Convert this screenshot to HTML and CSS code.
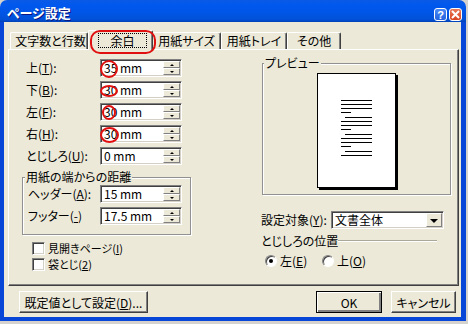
FILE: index.html
```html
<!DOCTYPE html>
<html>
<head>
  <meta charset="UTF-8">
  <link rel="stylesheet" href="styles.css">
</head>
<body>
  <!-- ダイアログ本体 -->
  <div class="window">
    <div class="titlebar">
      <span class="title">ページ設定</span>
      <span class="cap-btn help">?</span>
      <span class="cap-btn close">
        <svg width="9" height="9" viewBox="0 0 9 9"><path d="M1 1L8 8M8 1L1 8" stroke="#fff" stroke-width="2"/></svg>
      </span>
    </div>

    <div class="client">
      <!-- タブ -->
      <div class="tabs">
        <div class="tab t-chars">文字数と行数</div>
        <div class="tab t-margin active"><span class="focus">余白</span></div>
        <div class="tab t-size">用紙サイズ</div>
        <div class="tab t-tray">用紙トレイ</div>
        <div class="tab t-other">その他</div>
      </div>

      <!-- タブページ -->
      <div class="panel">
        <div class="col-left">
          <div class="field">
            <label>上(<u>T</u>):</label>
            <div class="spin mark m-top"><span class="val">35 mm</span><span class="arrows"><span class="up"></span><span class="down"></span></span></div>
          </div>
          <div class="field">
            <label>下(<u>B</u>):</label>
            <div class="spin mark m-bottom"><span class="val">30 mm</span><span class="arrows"><span class="up"></span><span class="down"></span></span></div>
          </div>
          <div class="field">
            <label>左(<u>F</u>):</label>
            <div class="spin mark m-left"><span class="val">30 mm</span><span class="arrows"><span class="up"></span><span class="down"></span></span></div>
          </div>
          <div class="field">
            <label>右(<u>H</u>):</label>
            <div class="spin mark m-right"><span class="val">30 mm</span><span class="arrows"><span class="up"></span><span class="down"></span></span></div>
          </div>
          <div class="field">
            <label>とじしろ(<u>U</u>):</label>
            <div class="spin"><span class="val">0 mm</span><span class="arrows"><span class="up"></span><span class="down"></span></span></div>
          </div>

          <fieldset class="group">
            <legend>用紙の端からの距離</legend>
            <div class="field">
              <label>ヘッダー(<u>A</u>):</label>
              <div class="spin"><span class="val">15 mm</span><span class="arrows"><span class="up"></span><span class="down"></span></span></div>
            </div>
            <div class="field">
              <label>フッター(<u>-</u>)</label>
              <div class="spin"><span class="val">17.5 mm</span><span class="arrows"><span class="up"></span><span class="down"></span></span></div>
            </div>
          </fieldset>

          <div class="checks">
            <div class="check"><span class="cb"></span>見開きページ(<u>I</u>)</div>
            <div class="check"><span class="cb"></span>袋とじ(<u>2</u>)</div>
          </div>
        </div>

        <div class="col-right">
          <fieldset class="preview">
            <legend>プレビュー</legend>
            <div class="page">
              <div class="para"><i class="ln"></i><i class="ln"></i><i class="ln"></i><i class="ln short"></i></div>
              <div class="para"><i class="ln indent"></i><i class="ln"></i><i class="ln"></i><i class="ln short"></i></div>
              <div class="para"><i class="ln indent"></i><i class="ln"></i><i class="ln"></i><i class="ln short"></i></div>
              <div class="para"><i class="ln indent"></i><i class="ln"></i></div>
            </div>
          </fieldset>

          <div class="select-row">
            <label>設定対象(<u>Y</u>):</label>
            <div class="select"><span class="val">文書全体</span><span class="drop"><span class="tri"></span></span></div>
          </div>

          <div class="sep-row">
            <span class="sep-label">とじしろの位置</span>
            <span class="sep-line"></span>
          </div>

          <div class="radios">
            <div class="radio r-left"><span class="rb on"></span>左(<u>E</u>)</div>
            <div class="radio"><span class="rb"></span>上(<u>O</u>)</div>
          </div>
        </div>
      </div>

      <!-- ボタン -->
      <div class="footer">
        <button class="btn btn-default">既定値として設定(<u>D</u>)...</button>
        <button class="btn btn-ok">OK</button>
        <button class="btn btn-cancel">キャンセル</button>
      </div>
    </div>
  </div>
</body>
</html>
```

FILE: styles.css
```css
/* 基本 */
body {
  margin: 0;
  background: #d6d3ce;
  font-family: "Noto Sans CJK JP", "Liberation Sans", sans-serif;
  font-size: 12px;
  line-height: 14px;
  font-feature-settings: "palt";
  color: #000;
}

u {
  text-decoration: underline;
  text-underline-offset: 1px;
}

.window {
  width: 466px;
}

/* タイトルバー */
.titlebar {
  display: flex;
  align-items: flex-start;
  height: 22px;
  padding: 0 4px 0 7px;
  border-radius: 7px 7px 0 0;
  background: linear-gradient(#0a5ae6, #0058ee 25%, #0055e5 60%, #0250d6 90%, #0042b4);
  color: #fff;
  box-sizing: border-box;
}

.title {
  flex: 1;
  margin-top: 4px;
  font-size: 13px;
  line-height: 17px;
  font-weight: bold;
  text-shadow: 1px 1px #0a1883;
}

.cap-btn {
  display: flex;
  align-items: center;
  justify-content: center;
  width: 13px;
  height: 13px;
  margin-top: 8px;
  box-sizing: border-box;
  border: 1px solid #fff;
  border-radius: 3px;
  font: bold 11px "Liberation Sans", sans-serif;
}

.help {
  margin-right: 2px;
  background: linear-gradient(#4b88f5, #2462e0);
}

.close {
  background: linear-gradient(#e87a5a, #d8431f);
}

/* クライアント領域 */
.client {
  border: solid #0846d8;
  border-width: 0 5px 4px 4px;
  background: #ece9d8;
  padding: 8px 2px 4px 4px;
}

/* タブ */
.tabs {
  display: flex;
  align-items: flex-end;
  height: 19px;
  padding-left: 2px;
}

.tab {
  height: 17px;
  box-sizing: border-box;
  border-top: 1px solid #fff;
  border-left: 1px solid #fff;
  border-right: 1px solid #404040;
  border-radius: 2px 2px 0 0;
  box-shadow: inset -1px 0 #808080;
  text-align: center;
  line-height: 15px;
  white-space: nowrap;
}

.t-chars { width: 78px; padding-left: 3px; }
.t-size { width: 68px; border-left: none; }
.t-tray { width: 66px; }
.t-other { width: 54px; }

.tab.active {
  position: relative;
  z-index: 1;
  width: 65px;
  height: 20px;
  margin-bottom: -1px;
  background: #ece9d8;
  padding: 2px 5px 0 9px;
  line-height: 13px;
}

.tab.active .focus {
  display: block;
  border: 1px dotted #000;
  height: 15px;
  box-sizing: border-box;
}

/* 赤い丸印 */
.tab.active::after {
  content: "";
  position: absolute;
  left: 1px;
  top: -1px;
  width: 66px;
  height: 24px;
  box-sizing: border-box;
  border: 2px solid #e01010;
  border-radius: 10px;
}

/* タブページ */
.panel {
  display: flex;
  height: 237px;
  box-sizing: border-box;
  border: 1px solid;
  border-color: #fff #404040 #404040 #fff;
  box-shadow: inset -1px -1px #808080;
}

.col-left {
  width: 252px;
  padding: 9px 0 0 13px;
  box-sizing: border-box;
}

.col-right {
  width: 197px;
  padding-top: 6px;
}

.field {
  display: flex;
  align-items: center;
  height: 18px;
  margin-bottom: 4px;
  padding-left: 4px;
  white-space: nowrap;
}

.field label {
  width: 74px;
}

/* スピンボックス */
.spin,
.select {
  position: relative;
  display: flex;
  width: 82px;
  height: 18px;
  box-sizing: border-box;
  background: #fff;
  border: 1px solid;
  border-color: #808080 #fff #fff #808080;
  box-shadow: inset 1px 1px #404040, inset -1px -1px #d4d0c8;
  padding: 1px;
}

.val {
  flex: 1;
  padding-left: 2px;
  line-height: 14px;
}

.arrows {
  display: flex;
  flex-direction: column;
  width: 17px;
}

.arrows span,
.drop {
  flex: 1;
  display: flex;
  align-items: center;
  justify-content: center;
  box-sizing: border-box;
  background: #ece9d8;
  border: 1px solid;
  border-color: #fff #808080 #808080 #fff;
}

.arrows .up::before,
.arrows .down::before {
  content: "";
  border: 2px solid transparent;
  border-top-width: 0;
  border-bottom-color: #000;
}

.arrows .down::before {
  border-top-width: 2px;
  border-bottom-width: 0;
  border-top-color: #000;
  border-bottom-color: transparent;
}

.mark::after {
  content: "";
  position: absolute;
  box-sizing: border-box;
  border: 2px solid #e01010;
  border-radius: 50%;
}

.m-top::after { left: -1px; top: 0; width: 18px; height: 18px; }
.m-bottom::after { left: -1px; top: 3px; width: 18px; height: 12px; }
.m-left::after { left: 1px; top: 1px; width: 14px; height: 15px; }
.m-right::after { left: -1px; top: 1px; width: 19px; height: 16px; }

/* グループボックス */
fieldset {
  margin: 0;
  box-sizing: border-box;
  border: 1px solid #919191;
  box-shadow: 1px 1px 0 #fff, inset 1px 1px 0 #fff;
  min-width: 0;
}

legend {
  background: #ece9d8;
  line-height: 14px;
  padding: 0 1px;
}

.group {
  width: 169px;
  margin-top: 5px;
  padding: 1px 8px 9px 5px;
}

.group legend {
  margin-left: -3px;
}

.group .field {
  padding-left: 0;
}

.group .field:last-child {
  margin-bottom: 0;
}

.group .field label {
  width: 72px;
}

/* チェックボックス */
.checks {
  margin-top: 5px;
  padding-left: 10px;
}

.check {
  display: flex;
  align-items: center;
  height: 16px;
  font-size: 11px;
  white-space: nowrap;
}

.cb {
  width: 13px;
  height: 13px;
  margin-right: 3px;
  box-sizing: border-box;
  background: #fff;
  border: 1px solid;
  border-color: #808080 #fff #fff #808080;
  box-shadow: inset 1px 1px #404040, inset -1px -1px #d4d0c8;
}

/* プレビュー */
.preview {
  width: 189px;
  margin-left: 1px;
  padding: 3px 0 6px;
}

.preview legend {
  margin-left: 1px;
}

.page {
  width: 79px;
  height: 115px;
  margin: 0 auto;
  box-sizing: border-box;
  padding: 26px 0 0 23px;
  background: #fff;
  border: 1px solid #000;
  box-shadow: 2px 2px 0 #000;
}

.para {
  margin-bottom: 4px;
}

.ln {
  display: block;
  width: 31px;
  height: 1px;
  margin-bottom: 3px;
  background: #000;
}

.ln.short { width: 10px; }
.ln.indent { width: 27px; margin-left: 4px; }

/* 設定対象 */
.select-row {
  display: flex;
  align-items: center;
  height: 18px;
  margin-top: 16px;
  white-space: nowrap;
}

.select-row label {
  width: 70px;
}

.select {
  width: 113px;
}

.drop {
  flex: 0 0 16px;
}

.tri {
  border: 4px solid transparent;
  border-bottom-width: 0;
  border-top-color: #000;
  margin-top: 1px;
}

.sep-row {
  display: flex;
  align-items: center;
  height: 14px;
  margin-top: 5px;
}

.sep-label {
  width: 77px;
  white-space: nowrap;
}

.sep-line {
  width: 99px;
  border-top: 1px solid #aca899;
  border-bottom: 1px solid #fff;
}

/* ラジオボタン */
.radios {
  display: flex;
  height: 14px;
  margin-top: 6px;
  padding-left: 4px;
}

.radio {
  display: flex;
  align-items: center;
  white-space: nowrap;
}

.r-left {
  width: 57px;
}

.rb {
  display: flex;
  align-items: center;
  justify-content: center;
  width: 12px;
  height: 12px;
  margin-right: 3px;
  box-sizing: border-box;
  border-radius: 50%;
  background: #fff;
  border: 1px solid;
  border-color: #808080 #fff #fff #808080;
  box-shadow: inset 1px 1px #404040;
}

.rb.on::after {
  content: "";
  width: 4px;
  height: 4px;
  border-radius: 50%;
  background: #000;
}

/* 下部ボタン */
.footer {
  display: flex;
  margin-top: 5px;
  padding: 0 3px 0 11px;
}

.btn {
  height: 22px;
  box-sizing: border-box;
  padding: 0;
  background: #ece9d8;
  border: 1px solid;
  border-color: #fff #404040 #404040 #fff;
  box-shadow: inset -1px -1px #808080;
  font: inherit;
  line-height: 19px;
  color: #000;
}

.btn-default { width: 129px; }

.btn-ok {
  width: 66px;
  margin-left: auto;
  border-color: #000;
  box-shadow: inset 1px 1px #fff, inset -2px -2px #808080;
}

.btn-cancel {
  width: 65px;
  margin-left: 9px;
}
```
